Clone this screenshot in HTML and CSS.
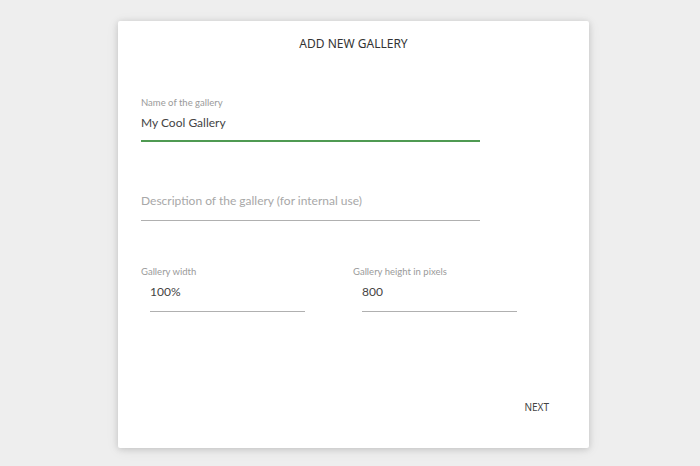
FILE: index.html
```html
<!DOCTYPE html>
<html>
<head>
<meta charset="utf-8">
<link rel="stylesheet" href="styles.css">
</head>
<body>
<div class="card">
  <h1 class="title">ADD NEW GALLERY</h1>
  <div class="field field-name">
    <label class="label">Name of the gallery</label>
    <div class="input active">My Cool Gallery</div>
  </div>
  <div class="field field-desc">
    <div class="input placeholder">Description of the gallery (for internal use)</div>
  </div>
  <div class="row">
    <div class="col">
      <label class="label">Gallery width</label>
      <div class="input small">100%</div>
    </div>
    <div class="col">
      <label class="label">Gallery height in pixels</label>
      <div class="input small">800</div>
    </div>
  </div>
  <div class="actions">
    <button class="next">NEXT</button>
  </div>
</div>
</body>
</html>
```
FILE: styles.css
```css
html, body {
  margin: 0;
  padding: 0;
}
body {
  background: #eeeeee;
  font-family: "Lato", "Noto Sans", sans-serif;
  width: 700px;
  height: 466px;
  overflow: hidden;
  padding-top: 21px;
  box-sizing: border-box;
}
.card {
  margin-left: 118px;
  width: 471px;
  height: 427px;
  background: #fff;
  border-radius: 2px;
  box-shadow: 0 1px 6px rgba(0,0,0,0.15), 0 2px 14px rgba(0,0,0,0.07);
  box-sizing: border-box;
  padding: 0 23px;
  display: flex;
  flex-direction: column;
}
.title {
  margin: 0;
  padding-top: 14px;
  height: 36px;
  font-family: "Noto Sans", "Open Sans", sans-serif;
  font-size: 12px;
  font-weight: 400;
  line-height: 18px;
  text-align: center;
  color: #333;
}
.field {
  width: 339px;
  display: flex;
  flex-direction: column;
}
.field-name {
  margin-top: 25px;
}
.label {
  display: block;
  font-size: 9.5px;
  line-height: 13px;
  color: #9a9a9a;
}
.input {
  font-size: 12px;
  line-height: 18px;
  color: #444;
  border-bottom: 1px solid #b0b0b0;
}
.field-name .input {
  padding-top: 5px;
  padding-bottom: 8px;
}
.input.active {
  border-bottom: 2px solid #4f9a52;
}
.field-desc {
  margin-top: 50px;
}
.input.placeholder {
  color: #a8a8a8;
  padding-bottom: 10px;
}
.row {
  display: flex;
  margin-top: 44px;
}
.col {
  width: 212px;
  display: flex;
  flex-direction: column;
}
.input.small {
  margin-left: 9px;
  width: 155px;
  padding-top: 5px;
  padding-bottom: 10px;
}
.actions {
  display: flex;
  justify-content: flex-end;
  margin-top: 87px;
  padding-right: 17px;
}
.next {
  background: none;
  border: none;
  padding: 0;
  font-family: "Noto Sans", "Open Sans", sans-serif;
  font-size: 10px;
  line-height: 16px;
  color: #444;
  cursor: pointer;
}
```
